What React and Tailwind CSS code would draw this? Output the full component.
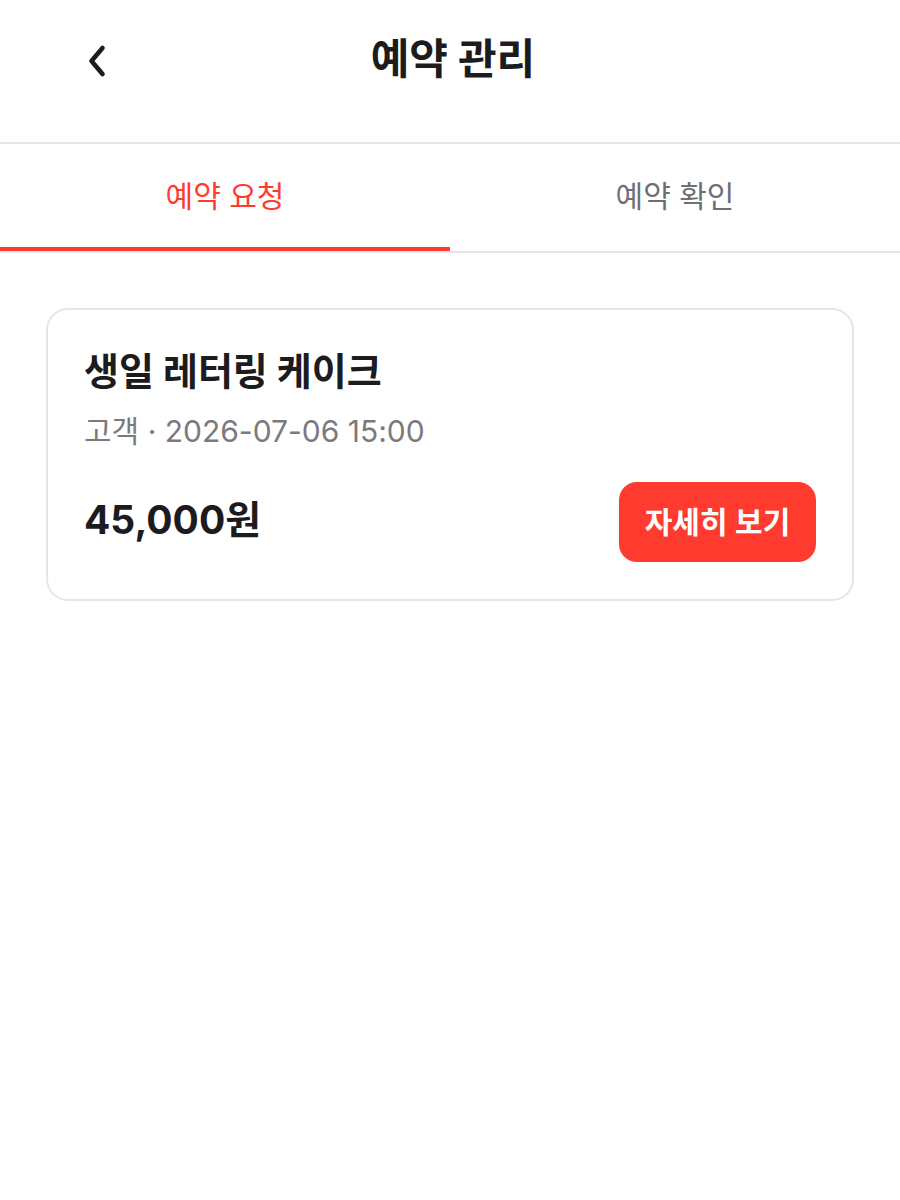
import React from "react";

export default function App() {
  return (
    <div
      className="w-[900px] min-h-[1200px] bg-white text-[#1c1c1e]"
      style={{ fontFamily: 'Inter, "Noto Sans CJK KR", "Noto Sans", sans-serif' }}
    >
      {/* Header */}
      <div className="relative h-[142px] flex items-center justify-center border-b-2 border-[#e5e5ea] box-content">
        <button className="absolute left-[84px] top-[42px] w-[26px] h-[38px] flex items-center justify-center">
          <svg width="22" height="34" viewBox="0 0 22 34" fill="none">
            <path d="M16.5 4 L5.5 17 L16.5 30" stroke="#1c1c1e" strokeWidth="4.6" strokeLinecap="round" strokeLinejoin="round" />
          </svg>
        </button>
        <h1 className="text-[42px] font-bold leading-none -mt-[24px] ml-[6px]">예약 관리</h1>
      </div>

      {/* Tabs */}
      <div className="flex border-b-2 border-[#e5e5ea]">
        <div className="flex-1 h-[107px] flex flex-col">
          <div className="flex-1 flex items-center justify-center text-[30px] text-[#ff3b30] leading-none">
            예약 요청
          </div>
          <div className="h-[4px] bg-[#ff3b30]" />
        </div>
        <div className="flex-1 h-[107px] flex flex-col">
          <div className="flex-1 flex items-center justify-center text-[30px] text-[#6e6e73] leading-none">
            예약 확인
          </div>
          <div className="h-[4px]" />
        </div>
      </div>

      {/* Card */}
      <div className="px-[46px] pt-[55px]">
        <div className="rounded-[22px] border-2 border-[#e5e5ea] px-[36px] pt-[36px] pb-[37px]">
          <div className="text-[38px] font-bold leading-[50px]">생일 레터링 케이크</div>
          <div className="mt-[15px] text-[30px] leading-[40px] text-[#7a7a7e]">고객 · 2026-07-06 15:00</div>
          <div className="mt-[31px] flex items-center justify-between">
            <div className="text-[39px] font-bold leading-none -mt-[6px]">45,000원</div>
            <button className="w-[197px] h-[80px] rounded-[18px] bg-[#ff3b30] text-white text-[30px] font-semibold flex items-center justify-center">
              자세히 보기
            </button>
          </div>
        </div>
      </div>
    </div>
  );
}
